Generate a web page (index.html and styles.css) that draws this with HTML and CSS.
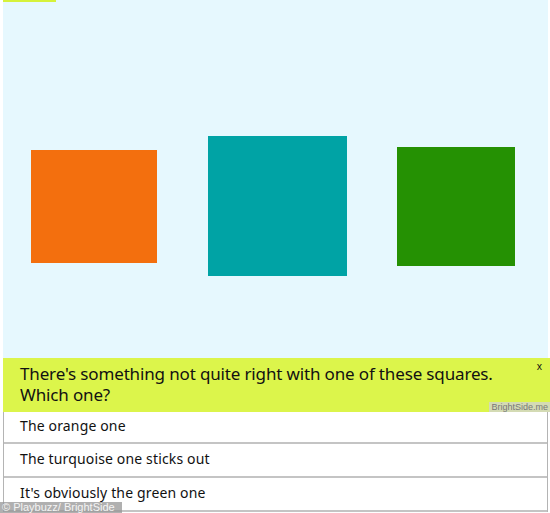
FILE: index.html
```html
<!DOCTYPE html>
<html lang="en">

<head>
    <meta charset="UTF-8">
    <meta name="viewport" content="width=device-width, initial-scale=1.0">
    <title>Squares quiz</title>
    <link rel="stylesheet" href="styles.css">
</head>

<body>
    <div class="quiz">
        <div class="progress"></div>
        <div class="picture">
            <div class="square orange"></div>
            <div class="square teal"></div>
            <div class="square green"></div>
        </div>
        <div class="question">
            There's something not quite right with one of these squares. Which one?
            <span class="close">x</span>
            <span class="credit">BrightSide.me</span>
        </div>
        <ul class="answers">
            <li>The orange one</li>
            <li>The turquoise one sticks out</li>
            <li>It's obviously the green one</li>
        </ul>
    </div>
    <div class="watermark">© Playbuzz/ BrightSide</div>
</body>

</html>
```

FILE: styles.css
```css
body {
    margin: 0;
    background: #fff;
    font-family: "Noto Sans", "Open Sans", sans-serif;
    color: #111;
    height: 513px;
    overflow: hidden;
    position: relative;
}

.quiz {
    margin-left: 3px;
    width: 545px;
    position: relative;
}

.progress {
    position: absolute;
    top: 0;
    left: 0;
    width: 53px;
    height: 2px;
    background: #d6f23a;
}

.picture {
    height: 358px;
    box-sizing: border-box;
    padding-top: 54px;
    padding-left: 28px;
    background: #e6f8fe;
    display: flex;
    align-items: center;
}

.square {
    flex: none;
}

.orange {
    width: 126px;
    height: 113px;
    background: #f36f0e;
}

.teal {
    width: 139px;
    height: 140px;
    margin-left: 51px;
    background: #00a3a5;
}

.green {
    width: 118px;
    height: 119px;
    margin-left: 50px;
    background: #259103;
}

.question {
    position: relative;
    height: 54px;
    box-sizing: border-box;
    padding: 5px 40px 0 17px;
    background: #dcf54b;
    font-size: 17px;
    letter-spacing: -0.15px;
    line-height: 21px;
    width: 547px;
}

.close {
    position: absolute;
    top: 2px;
    right: 8px;
    font-size: 10px;
    line-height: 12px;
    letter-spacing: 0;
}

.credit {
    position: absolute;
    right: 0;
    bottom: 0;
    padding: 0 2px;
    font-family: "Liberation Sans", Arial, sans-serif;
    font-size: 9px;
    line-height: 10px;
    letter-spacing: 0;
    color: #777;
    background: #d4dbb4;
}

.answers {
    list-style: none;
    margin: 0;
    padding: 0;
    border-left: 1px solid #b4b4b4;
    border-right: 1px solid #b4b4b4;
}

.answers li {
    height: 34px;
    box-sizing: border-box;
    padding-left: 16px;
    border-bottom: 2px solid #c4c4c4;
    font-size: 14px;
    letter-spacing: 0.15px;
    line-height: 30px;
    background: #fff;
}

.answers li:first-child {
    height: 32px;
    line-height: 27px;
}

.watermark {
    position: absolute;
    left: 0;
    bottom: 0;
    width: 122px;
    padding-left: 2px;
    box-sizing: border-box;
    background: rgba(150, 150, 150, 0.75);
    color: #f4f4f4;
    font-family: "Liberation Sans", Arial, sans-serif;
    font-size: 11px;
    line-height: 11px;
}
```
